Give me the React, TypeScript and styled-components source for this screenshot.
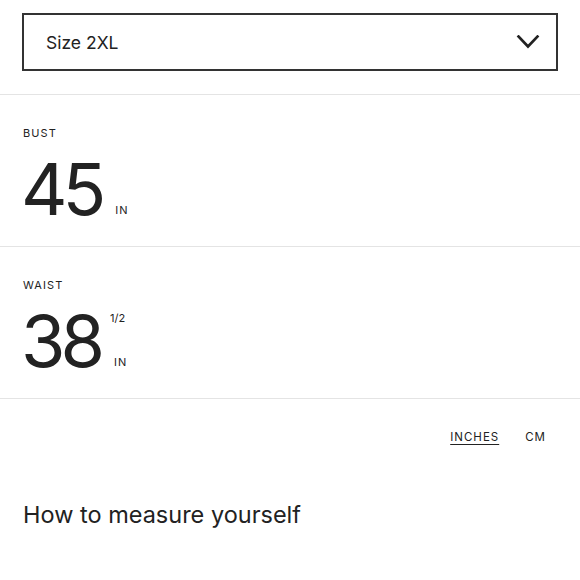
import * as React from 'react';
import styled, { createGlobalStyle } from 'styled-components';

const GlobalStyle = createGlobalStyle`
    body {
        margin: 0;
        background: #ffffff;
        font-family: 'Inter', 'Noto Sans', sans-serif;
        color: #222222;
    }
`;

const Page = styled.div`
    width: 580px;
    display: flex;
    flex-direction: column;
`;

const SelectWrap = styled.div`
    padding: 13px 22px 23px 22px;
    border-bottom: 1px solid #e4e4e4;
`;

const SelectBox = styled.div`
    height: 58px;
    box-sizing: border-box;
    border: 2px solid #333333;
    display: flex;
    align-items: center;
    justify-content: space-between;
    padding: 0 16px 0 22px;
`;

const SelectText = styled.span`
    font-size: 17.5px;
    color: #222222;
`;

const Section = styled.div`
    padding: 31px 23px 21px 23px;
    border-bottom: 1px solid #e4e4e4;
`;

const Label = styled.div`
    font-size: 11px;
    line-height: 14px;
    letter-spacing: 1.1px;
    text-transform: uppercase;
`;

const ValueRow = styled.div`
    display: flex;
    margin-top: 13px;
`;

const Number = styled.span`
    font-size: 72px;
    line-height: 72px;
    letter-spacing: -5px;
    margin-left: -2px;
`;

const Side = styled.div<{ $gap: number }>`
    display: flex;
    flex-direction: column;
    justify-content: flex-end;
    margin-left: ${(p) => p.$gap}px;
    padding: 6px 0 8px 0;
`;

const Fraction = styled.span`
    font-size: 11px;
    line-height: 14px;
    margin-bottom: auto;
`;

const Unit = styled.span<{ $indent?: number }>`
    font-size: 11px;
    line-height: 14px;
    letter-spacing: 1px;
    padding-left: ${(p) => p.$indent || 0}px;
`;

const UnitToggle = styled.div`
    display: flex;
    justify-content: flex-end;
    gap: 26px;
    padding: 31px 34px 0 0;
`;

const ToggleItem = styled.span<{ $active?: boolean }>`
    font-size: 11.5px;
    line-height: 14px;
    letter-spacing: 1px;
    color: #222222;
    text-decoration: ${(p) => (p.$active ? 'underline' : 'none')};
    text-underline-offset: 3px;
`;

const Heading = styled.h2`
    margin: 57px 0 0 23px;
    font-size: 23.5px;
    font-weight: 400;
    line-height: 28px;
    color: #222222;
`;

const Chevron = () => (
    <svg width="24" height="14" viewBox="0 0 24 14" fill="none">
        <path
            d="M2.5 1.5 L12 11.5 L21.5 1.5"
            stroke="#222222"
            strokeWidth="2.6"
            strokeLinecap="square"
        />
    </svg>
);

interface IMeasure {
    label: string;
    value: string;
    fraction?: string;
}

const measures: IMeasure[] = [
    { label: 'Bust', value: '45' },
    { label: 'Waist', value: '38', fraction: '1/2' },
];

const App = (): JSX.Element => {
    return (
        <Page>
            <GlobalStyle />
            <SelectWrap>
                <SelectBox>
                    <SelectText>Size 2XL</SelectText>
                    <Chevron />
                </SelectBox>
            </SelectWrap>
            {measures.map((m) => (
                <Section key={m.label}>
                    <Label>{m.label}</Label>
                    <ValueRow>
                        <Number>{m.value}</Number>
                        <Side $gap={m.fraction ? 10 : 14}>
                            {m.fraction && <Fraction>{m.fraction}</Fraction>}
                            <Unit $indent={m.fraction ? 4 : 0}>IN</Unit>
                        </Side>
                    </ValueRow>
                </Section>
            ))}
            <UnitToggle>
                <ToggleItem $active>INCHES</ToggleItem>
                <ToggleItem>CM</ToggleItem>
            </UnitToggle>
            <Heading>How to measure yourself</Heading>
        </Page>
    );
};

export default App;
